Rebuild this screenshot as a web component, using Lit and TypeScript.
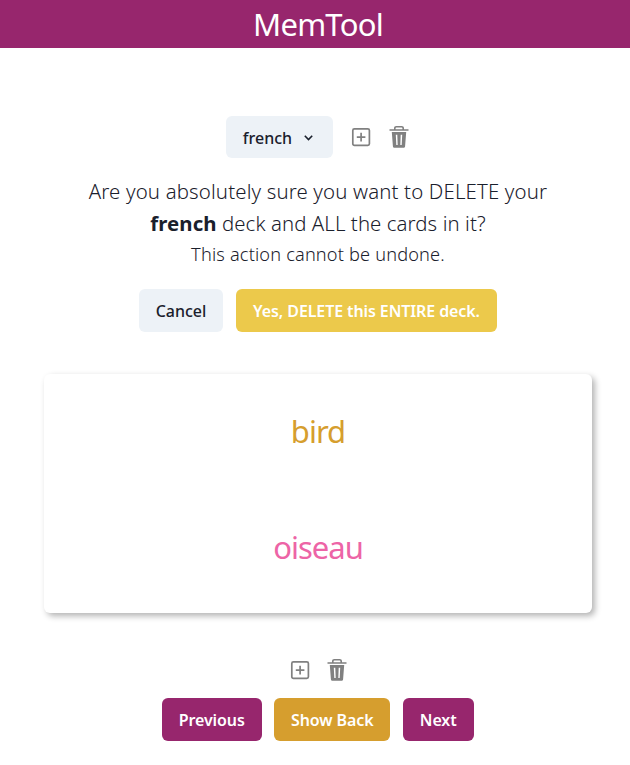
import { LitElement, html, css } from "lit";
import { customElement, property, state } from "lit/decorators.js";

@customElement("deck-icons")
export class DeckIcons extends LitElement {
  static styles = css`
    :host { display: flex; justify-content: center; gap: 18px; color: #808080; }
    svg { display: block; width: 20px; height: 24px; overflow: visible; }
  `;

  render() {
    return html`
      <svg viewBox="0 0 20 24" fill="none" stroke="currentColor">
        <rect x="1.8" y="3.8" width="16.6" height="16.6" rx="1.6" stroke-width="1.7" />
        <path d="M10.1 7.8v8.6M5.8 12.1h8.6" stroke-width="1.7" />
      </svg>
      <svg viewBox="0 0 20 24">
        <path
          fill="currentColor"
          fill-rule="evenodd"
          d="M.5 4.2H5V3.3C5 1.9 5.9 1 7.3 1h5.4C14.1 1 15 1.9 15 3.3v.9h4.5v1.6H.5zM6.6 4.2h6.8v-.9c0-.5-.3-.8-.8-.8H7.4c-.5 0-.8.3-.8.8zM2.8 7h14.4l-1.1 14.2c-.1 1-.8 1.6-1.8 1.6H5.7c-1 0-1.7-.6-1.8-1.6zM6.8 9.8l.5 10.2h1.4l-.4-10.2zM11.7 9.8l-.4 10.2h1.4l.5-10.2z"
        />
      </svg>
    `;
  }
}

@customElement("app-root")
export class AppRoot extends LitElement {
  @property() deck = "french";
  @state() private front = "bird";
  @state() private back = "oiseau";

  static styles = css`
    :host {
      display: block;
      height: 765px;
      overflow: hidden;
      background: #fff;
      color: #1a202c;
      font-family: "Segoe UI", "Noto Sans", "Open Sans", sans-serif;
    }
    header {
      height: 48px;
      background: #97266d;
      color: #fff;
      font-size: 31px;
      line-height: 49px;
      letter-spacing: -0.75px;
      text-align: center;
      text-indent: 6px;
    }
    main { display: flex; flex-direction: column; align-items: center; padding: 68px 0 0 6px; }
    .row { display: flex; justify-content: center; align-items: center; }
    .tools { gap: 18px; height: 42px; padding-right: 1px; }
    button {
      height: 43px;
      padding: 1px 0 0;
      border: 0;
      border-radius: 6px;
      background: #edf2f7;
      color: #1a202c;
      font: 600 16px/42px "Segoe UI", "Noto Sans", "Open Sans", sans-serif;
      letter-spacing: -0.1px;
      white-space: nowrap;
    }
    .deck { display: flex; align-items: center; justify-content: center; gap: 12px; width: 107px; height: 42px; padding: 1px 3px 0 0; font-weight: 500; letter-spacing: 0; }
    .deck svg { width: 9px; height: 6px; }
    p { margin: 0; text-align: center; white-space: nowrap; }
    .question { margin-top: 17px; padding-bottom: 1px; font-size: 20.4px; line-height: 32px; font-weight: 350; }
    .q1 { letter-spacing: 0.15px; }
    .q2 { letter-spacing: 0.08px; }
    .note { font-size: 18.2px; line-height: 29px; padding-bottom: 1px; font-weight: 350; letter-spacing: 0.16px; }
    .confirm { gap: 13px; margin-top: 19px; }
    .cancel { width: 84px; font-weight: 500; letter-spacing: 0; }
    .delete { width: 261px; background: #ecc94b; color: #fff; }
    .card {
      display: grid;
      grid-template-rows: 116px 1fr;
      box-sizing: border-box;
      width: 548px;
      height: 239px;
      margin-top: 42px;
      border-radius: 6px;
      box-shadow: 3px 3px 6px rgba(0, 0, 0, 0.3);
      font-size: 31px;
      line-height: 114px;
      letter-spacing: -1px;
      text-align: center;
    }
    .front { color: #d69e2e; }
    .back { color: #ed64a6; }
    .lower { margin-top: 45px; gap: 17px; }
    .nav { gap: 12.5px; margin-top: 16px; padding-right: 0.5px; }
    .nav button { color: #fff; background: #97266d; }
    .prev { width: 100px; }
    .nav .flip { width: 116px; background: #d69e2e; }
    .next { width: 71px; }
  `;

  render() {
    return html`
      <header><span>MemTool</span></header>
      <main>
        <div class="row tools">
          <button class="deck">
            <span>${this.deck}</span>
            <svg viewBox="0 0 9 6" fill="none" stroke="currentColor" stroke-width="1.6">
              <path d="M.8.8l3.7 3.7L8.2.8" />
            </svg>
          </button>
          <deck-icons></deck-icons>
        </div>
        <p class="question">
          <span class="q1">Are you absolutely sure you want to DELETE your</span><br />
          <span class="q2"><b>${this.deck}</b> deck and ALL the cards in it?</span>
        </p>
        <p class="note"><span>This action cannot be undone.</span></p>
        <div class="row confirm">
          <button class="cancel"><span>Cancel</span></button>
          <button class="delete"><span>Yes, DELETE this ENTIRE deck.</span></button>
        </div>
        <section class="card">
          <span class="front">${this.front}</span>
          <span class="back">${this.back}</span>
        </section>
        <deck-icons class="lower"></deck-icons>
        <div class="row nav">
          <button class="prev"><span>Previous</span></button>
          <button class="flip"><span>Show Back</span></button>
          <button class="next"><span>Next</span></button>
        </div>
      </main>
    `;
  }
}
